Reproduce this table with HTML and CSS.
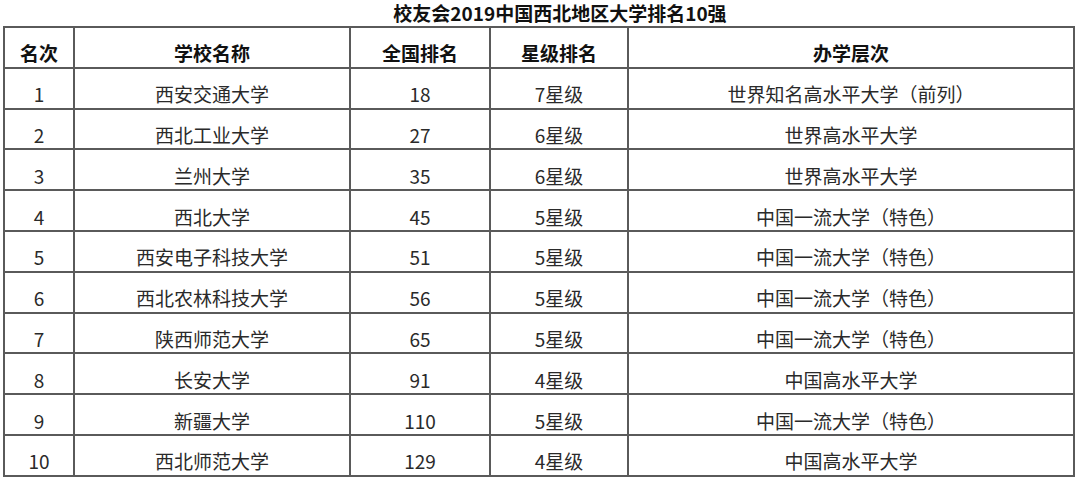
FILE: index.html
```html
<!DOCTYPE html>
<html lang="zh-CN">
<head>
<meta charset="utf-8">
<title>校友会2019中国西北地区大学排名10强</title>
<link rel="stylesheet" href="styles.css">
</head>
<body>
<div class="page">
  <h1 class="title">校友会2019中国西北地区大学排名10强</h1>
  <table class="rank">
    <colgroup>
      <col class="c1"><col class="c2"><col class="c3"><col class="c4"><col class="c5">
    </colgroup>
    <thead>
      <tr><th>名次</th><th>学校名称</th><th>全国排名</th><th>星级排名</th><th>办学层次</th></tr>
    </thead>
    <tbody>
      <tr><td>1</td><td>西安交通大学</td><td>18</td><td>7星级</td><td>世界知名高水平大学（前列）</td></tr>
      <tr><td>2</td><td>西北工业大学</td><td>27</td><td>6星级</td><td>世界高水平大学</td></tr>
      <tr><td>3</td><td>兰州大学</td><td>35</td><td>6星级</td><td>世界高水平大学</td></tr>
      <tr><td>4</td><td>西北大学</td><td>45</td><td>5星级</td><td>中国一流大学（特色）</td></tr>
      <tr><td>5</td><td>西安电子科技大学</td><td>51</td><td>5星级</td><td>中国一流大学（特色）</td></tr>
      <tr><td>6</td><td>西北农林科技大学</td><td>56</td><td>5星级</td><td>中国一流大学（特色）</td></tr>
      <tr><td>7</td><td>陕西师范大学</td><td>65</td><td>5星级</td><td>中国一流大学（特色）</td></tr>
      <tr><td>8</td><td>长安大学</td><td>91</td><td>4星级</td><td>中国高水平大学</td></tr>
      <tr><td>9</td><td>新疆大学</td><td>110</td><td>5星级</td><td>中国一流大学（特色）</td></tr>
      <tr><td>10</td><td>西北师范大学</td><td>129</td><td>4星级</td><td>中国高水平大学</td></tr>
    </tbody>
  </table>
</div>
</body>
</html>
```
FILE: styles.css
```css
html, body {
  margin: 0;
  padding: 0;
  background: #ffffff;
}
body {
  font-family: "Noto Sans CJK SC", "Noto Sans", sans-serif;
  color: #2a2a2a;
  width: 1080px;
  height: 481px;
  overflow: hidden;
}
.page {
  padding-left: 3px;
}
.title {
  margin: 0;
  height: 26px;
  line-height: 26px;
  font-size: 19px;
  font-weight: bold;
  color: #111;
  text-align: center;
  padding-left: 37px;
  width: 1040px;
}
.rank {
  border-collapse: collapse;
  table-layout: fixed;
  width: 1070px;
  font-size: 19px;
}
.c1 { width: 70px; }
.c2 { width: 276px; }
.c3 { width: 140px; }
.c4 { width: 138px; }
.c5 { width: 446px; }
.rank th,
.rank td {
  border: 2px solid #5a5a5a;
  text-align: center;
  vertical-align: middle;
  padding: 12px 0 0;
  line-height: 24px;
  white-space: nowrap;
}
.rank th {
  font-weight: bold;
  color: #111;
}
.rank tr {
  height: 40.8px;
}
```
